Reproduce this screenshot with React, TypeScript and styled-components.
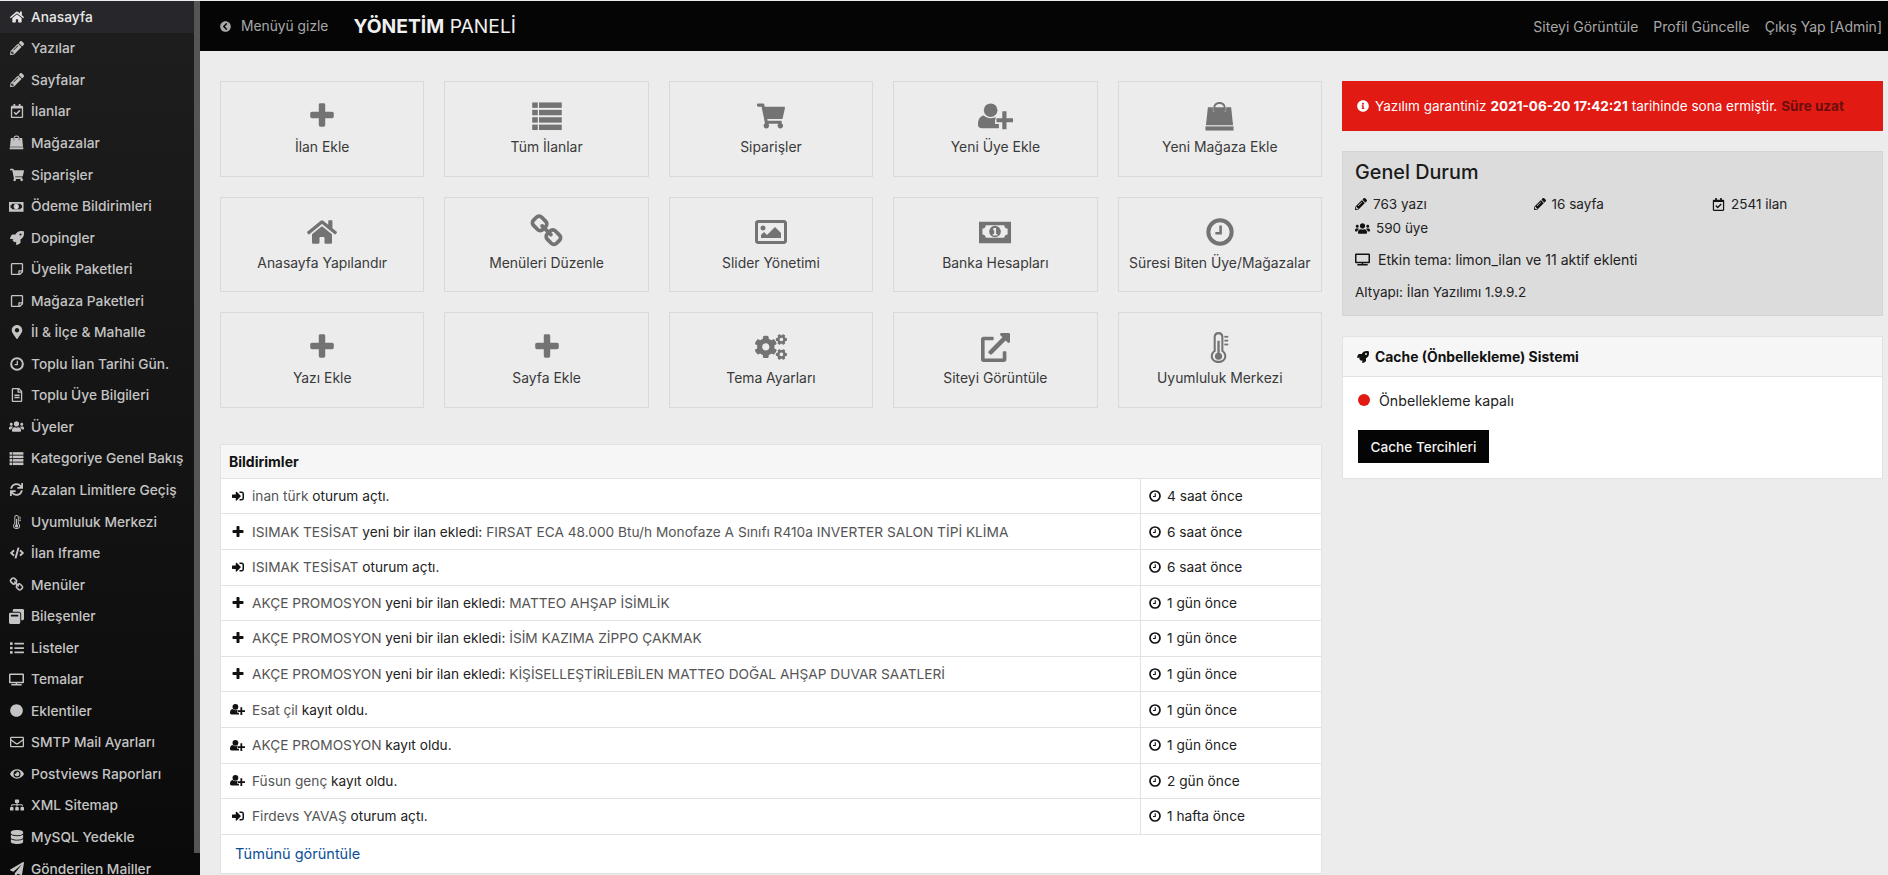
import React from "react";
import styled, { createGlobalStyle } from "styled-components";
import type { IconType } from "react-icons";
import {
  FaHome, FaPencilAlt, FaRegCalendarCheck, FaShoppingCart, FaRocket,
  FaRegStickyNote, FaMapMarkerAlt, FaRegFileAlt, FaUsers, FaSync, FaCode,
  FaWindowRestore, FaList, FaTv, FaCircle, FaRegEnvelope, FaEye, FaSitemap, FaDatabase,
  FaPaperPlane, FaSignInAlt, FaInfoCircle, FaChevronCircleLeft, FaRegImage,
  FaCogs, FaExternalLinkAlt,
} from "react-icons/fa";

const FONT = `Inter, "Noto Sans", "Liberation Sans", sans-serif`;

const Global = createGlobalStyle`
  html, body { margin: 0; padding: 0; height: 875px; overflow: hidden; background: #ececec; }
  body { font-family: ${FONT}; font-size: 13.7px; color: #222; }
  * { box-sizing: border-box; }
  a { text-decoration: none; color: inherit; }
`;

const Thermo: IconType = ({ size }: any) => (
  <svg viewBox="0 0 20 32" width={size} height={size} fill="currentColor">
    <path fillRule="evenodd" d="M9 0c-3 0-5 2-5 5v14c-2 1.500-3 3.500-3 6 0 4 3.500 7 8 7s8-3 8-7c0-2.500-1-4.500-3-6V5c0-3-2-5-5-5zm0 2.200c1.700 0 2.900 1.200 2.900 2.800v15.200c1.900 1 3 2.800 3 4.800 0 2.900-2.600 4.800-5.900 4.800S3.100 27.900 3.100 25c0-2 1.100-3.800 3-4.800V5c0-1.600 1.200-2.800 2.900-2.800z" />
    <circle cx="9" cy="25" r="3.700" />
    <rect x="7.800" y="9" width="2.400" height="14" />
    <rect x="15" y="4" width="4" height="1.800" />
    <rect x="15" y="8" width="4" height="1.800" />
    <rect x="15" y="12" width="4" height="1.800" />
  </svg>
);

const Plus: IconType = ({ size }: any) => (
  <svg viewBox="0 0 1792 1792" width={size} height={size} fill="currentColor">
    <path d="M1600 736v192q0 40-28 68t-68 28h-416v416q0 40-28 68t-68 28h-192q-40 0-68-28t-28-68v-416h-416q-40 0-68-28t-28-68v-192q0-40 28-68t68-28h416v-416q0-40 28-68t68-28h192q40 0 68 28t28 68v416h416q40 0 68 28t28 68z" />
  </svg>
);

const Chain: IconType = ({ size }: any) => (
  <svg viewBox="0 0 1792 1792" width={size} height={size} fill="currentColor">
    <path d="M1520 1216q0-40-28-68l-208-208q-28-28-68-28-42 0-72 32 3 3 19 18.500t21.500 21.500 15 19 13 25.500 3.500 27.500q0 40-28 68t-68 28q-15 0-27.500-3.500t-25.500-13-19-15-21.500-21.500-18.500-19q-33 31-33 73 0 40 28 68l206 207q27 27 68 27 40 0 68-26l147-146q28-28 28-67zm-703-705q0-40-28-68l-206-207q-28-28-68-28-39 0-68 27l-147 146q-28 28-28 67 0 40 28 68l208 208q27 27 68 27 42 0 72-31-3-3-19-18.500t-21.500-21.500-15-19-13-25.500-3.500-27.500q0-40 28-68t68-28q15 0 27.500 3.500t25.500 13 19 15 21.500 21.500 18.500 19q33-31 33-73zm895 705q0 120-85 203l-147 146q-83 83-203 83-121 0-204-85l-206-207q-83-83-83-203 0-123 88-209l-88-88q-86 88-208 88-120 0-204-84l-208-208q-84-84-84-204t85-203l147-146q83-83 203-83 121 0 204 85l206 207q83 83 83 203 0 123-88 209l88 88q86-88 208-88 120 0 204 84l208 208q84 84 84 204z" />
  </svg>
);

const Rows: IconType = ({ size }: any) => (
  <svg viewBox="0 0 26 24" width={size} height={size} fill="currentColor">
    {[1, 7, 13, 19].map((y) => (
      <React.Fragment key={y}>
        <rect x="1" y={y} width="4.500" height="4.400" />
        <rect x="6.500" y={y} width="18.500" height="4.400" />
      </React.Fragment>
    ))}
  </svg>
);

const Clock: IconType = ({ size }: any) => (
  <svg viewBox="0 0 24 24" width={size} height={size} fill="none" stroke="currentColor">
    <circle cx="12" cy="12" r="10" strokeWidth="3.400" />
    <path d="M12.500 6.500v6.500H8" strokeWidth="2.200" />
  </svg>
);

const Bag: IconType = ({ size }: any) => (
  <svg viewBox="0 0 32 32" width={size} height={size} fill="currentColor">
    <path d="M9.500 11V8C9.500 3.500 12 1 16 1s6.500 2.500 6.500 7v3h-1.800V8c0-3-1.800-5-4.700-5s-4.700 2-4.700 5v3z" />
    <path d="M4 6.500h5.200V11h2V6.500h9.600V11h2V6.500H28l2 18.500H2z" />
    <rect x="1.500" y="26.200" width="29" height="4.300" />
  </svg>
);

const Money: IconType = ({ size }: any) => (
  <svg viewBox="0 0 34 24" width={size} height={size} fill="currentColor">
    <path fillRule="evenodd" d="M0 2h33v22H0zM7 5.500C7 7.500 5.500 9 3.500 9v6c2 0 3.500 1.500 3.500 3.500h19c0-2 1.500-3.500 3.500-3.500V9C27.500 9 26 7.500 26 5.500z" />
    <circle cx="16.500" cy="12" r="6" />
    <path d="M15 8.500h2.600v6H19V16h-4.800v-1.500h1.400v-4l-1.200.500z" fill="#ececec" />
  </svg>
);

const UserAdd: IconType = ({ size }: any) => (
  <svg viewBox="0 0 36 28" width={size} height={size} fill="currentColor">
    <circle cx="13" cy="7.500" r="7" />
    <path d="M0 22.500C0 17 2 13.500 6 13c2 1.800 4.500 2.800 7 2.800S17.500 15 19.500 13.500l-1.500 1v2.800H18.500h-1v4.400h4V26H4c-2.500 0-4-1.400-4-3.500z" />
    <path d="M25 8.500h4.300v7.200H36V20h-6.700v7.200H25V20h-6v-4.300h6z" />
  </svg>
);

const Shell = styled.div`
  display: grid;
  grid-template-columns: 200px 1fr;
  height: 875px;
  padding-top: 1px;
  background: #ececec;
  overflow: hidden;
`;

const Sidebar = styled.nav`
  position: relative;
  height: 874px;
  overflow: hidden;
  background: linear-gradient(#1e1e1e, #0a0a0a);
`;

const ScrollThumb = styled.div`
  position: absolute;
  top: 0;
  right: 0;
  width: 6px;
  height: 852px;
  background: #555;
`;

const MenuItem = styled.a<{ $active?: boolean }>`
  display: flex;
  align-items: center;
  height: 31.55px;
  width: 194px;
  padding-left: 9px;
  background: ${(p) => (p.$active ? "#26262b" : "transparent")};
  color: ${(p) => (p.$active ? "#e6e6e6" : "#c4c4c4")};
  font-size: 13.750px;
  font-weight: 500;
  white-space: nowrap;
`;

const MenuIcon = styled.span`
  display: flex;
  justify-content: center;
  width: 15px;
  margin-right: 7px;
`;

const Main = styled.main`
  display: flex;
  flex-direction: column;
  min-width: 0;
`;

const TopBar = styled.header`
  display: flex;
  align-items: center;
  height: 50px;
  padding: 0 6px 0 20px;
  background: #050505;
`;

const HideMenu = styled.a`
  display: flex;
  align-items: center;
  gap: 10px;
  color: #a8a8a8;
  font-size: 13.800px;
`;

const Brand = styled.div`
  margin-left: 25px;
  color: #f0f0f0;
  font-size: 19.300px;
  b { font-weight: 700; }
`;

const TopLinks = styled.div`
  display: flex;
  gap: 15px;
  margin-left: auto;
  color: #a8a8a8;
  font-size: 14px;
`;

const Content = styled.div`
  display: grid;
  grid-template-columns: 1102px 541px;
  gap: 20px;
  padding: 30px 0 0 20px;
`;

const LeftCol = styled.div`
  display: flex;
  flex-direction: column;
  gap: 36px;
`;

const Tiles = styled.div`
  display: grid;
  grid-template-columns: repeat(5, 1fr);
  grid-auto-rows: 95.600px;
  gap: 20px;
`;

const Tile = styled.a`
  display: flex;
  flex-direction: column;
  align-items: center;
  border: 1.500px solid #d9d9d9;
  color: #3a3a3a;
  font-size: 13.900px;
  font-weight: 400;
  white-space: nowrap;
`;

const TileIcon = styled.span`
  display: flex;
  align-items: center;
  justify-content: center;
  height: 34px;
  margin-top: 17px;
  color: #737373;
`;

const TileLabel = styled.span`
  margin-top: 6px;
`;

const Panel = styled.section`
  background: #fff;
  border: 1px solid #e2e2e2;
`;

const PanelHead = styled.div<{ $h: number; $pad: number; $size: number }>`
  display: flex;
  align-items: center;
  gap: 6px;
  height: ${(p) => p.$h}px;
  padding: 0 ${(p) => p.$pad}px;
  background: #f6f6f6;
  border-bottom: 1px solid #e2e2e2;
  color: #111;
  font-size: ${(p) => p.$size}px;
  font-weight: 700;
`;

const NotifRow = styled.div`
  display: grid;
  grid-template-columns: 920px 1fr;
  height: 35.600px;
  border-bottom: 1px solid #e2e2e2;
`;

const NotifText = styled.div`
  display: flex;
  align-items: center;
  padding-left: 9px;
  border-right: 1px solid #e2e2e2;
  color: #222;
  white-space: nowrap;
  a { color: #555; }
`;

const NotifIcon = styled.span`
  display: flex;
  justify-content: center;
  width: 15px;
  margin-right: 7px;
  color: #111;
`;

const NotifTime = styled.div`
  display: flex;
  align-items: center;
  gap: 6px;
  padding-left: 8px;
  color: #222;
  white-space: nowrap;
  svg { color: #111; }
`;

const ViewAll = styled.a`
  display: flex;
  align-items: center;
  height: 38px;
  padding-left: 14px;
  color: #0b4f96;
  font-size: 14.500px;
`;

const RightCol = styled.aside`
  display: flex;
  flex-direction: column;
  gap: 20px;
`;

const Alert = styled.div`
  display: flex;
  align-items: center;
  gap: 6px;
  height: 50px;
  padding-left: 15px;
  background: #e21a14;
  color: #fff;
  font-size: 13.500px;
  white-space: nowrap;
  b { font-weight: 700; margin: 0 4px; }
  a { color: #6a0f0c; font-weight: 700; margin-left: 4px; }
`;

const Status = styled.section`
  height: 165px;
  padding: 8px 12px;
  background: #dcdcdc;
  border: 1px solid #d4d4d4;
  color: #222;
  font-size: 13.500px;
`;

const StatusTitle = styled.h2`
  margin: 0 0 8px;
  color: #1a1a1a;
  font-size: 19.800px;
  font-weight: 500;
  line-height: 24px;
`;

const StatGrid = styled.div`
  display: grid;
  grid-template-columns: repeat(3, 178.500px);
  grid-auto-rows: 24px;
`;

const Stat = styled.div`
  display: flex;
  align-items: center;
  gap: 6px;
  svg { color: #111; }
`;

const ThemeLine = styled.div`
  display: flex;
  align-items: center;
  gap: 8px;
  margin-top: 7px;
  height: 24px;
  font-size: 14.100px;
  svg { color: #111; }
`;

const BaseLine = styled.div`
  margin-top: 9px;
  line-height: 24px;
`;

const CacheBody = styled.div`
  padding: 12px 15px 15px;
`;

const CacheState = styled.div`
  display: flex;
  align-items: center;
  gap: 9px;
  height: 22px;
  color: #222;
  font-size: 14.200px;
`;

const Dot = styled.span`
  width: 12px;
  height: 12px;
  border-radius: 50%;
  background: #e21a14;
`;

const CacheButton = styled.button`
  display: block;
  width: 131px;
  height: 33px;
  margin-top: 19px;
  padding: 0;
  border: 0;
  background: #050505;
  color: #f2f2f2;
  font-family: ${FONT};
  font-size: 13.600px;
  font-weight: 500;
`;

const menu: [IconType, string, number][] = [
  [FaHome, "Anasayfa", 14], [FaPencilAlt, "Yazılar", 14], [FaPencilAlt, "Sayfalar", 14], [FaRegCalendarCheck, "İlanlar", 14],
  [Bag, "Mağazalar", 15], [FaShoppingCart, "Siparişler", 14], [Money, "Ödeme Bildirimleri", 15],
  [FaRocket, "Dopingler", 14], [FaRegStickyNote, "Üyelik Paketleri", 14], [FaRegStickyNote, "Mağaza Paketleri", 14],
  [FaMapMarkerAlt, "İl & İlçe & Mahalle", 14], [Clock, "Toplu İlan Tarihi Gün.", 14], [FaRegFileAlt, "Toplu Üye Bilgileri", 14],
  [FaUsers, "Üyeler", 15], [Rows, "Kategoriye Genel Bakış", 15], [FaSync, "Azalan Limitlere Geçiş", 13],
  [Thermo, "Uyumluluk Merkezi", 14], [FaCode, "İlan Iframe", 14], [Chain, "Menüler", 15], [FaWindowRestore, "Bileşenler", 15],
  [FaList, "Listeler", 14], [FaTv, "Temalar", 15], [FaCircle, "Eklentiler", 13], [FaRegEnvelope, "SMTP Mail Ayarları", 14],
  [FaEye, "Postviews Raporları", 14], [FaSitemap, "XML Sitemap", 14], [FaDatabase, "MySQL Yedekle", 14], [FaPaperPlane, "Gönderilen Mailler", 14],
];

const tiles: [IconType, string, number][] = [
  [Plus, "İlan Ekle", 30], [Rows, "Tüm İlanlar", 32], [FaShoppingCart, "Siparişler", 28], [UserAdd, "Yeni Üye Ekle", 35], [Bag, "Yeni Mağaza Ekle", 31],
  [FaHome, "Anasayfa Yapılandır", 30], [Chain, "Menüleri Düzenle", 35], [FaRegImage, "Slider Yönetimi", 32], [Money, "Banka Hesapları", 33], [Clock, "Süresi Biten Üye/Mağazalar", 28],
  [Plus, "Yazı Ekle", 30], [Plus, "Sayfa Ekle", 30], [FaCogs, "Tema Ayarları", 32], [FaExternalLinkAlt, "Siteyi Görüntüle", 29], [Thermo, "Uyumluluk Merkezi", 31],
];

const AK = "AKÇE PROMOSYON";
const NEW = " yeni bir ilan ekledi: ";
const notifs: [IconType, string, string, string, string, number][] = [
  [FaSignInAlt, "inan türk", " oturum açtı.", "", "4 saat önce", 12],
  [Plus, "ISIMAK TESİSAT", NEW, "FIRSAT ECA 48.000 Btu/h Monofaze A Sınıfı R410a INVERTER SALON TİPİ KLİMA", "6 saat önce", 14],
  [FaSignInAlt, "ISIMAK TESİSAT", " oturum açtı.", "", "6 saat önce", 12],
  [Plus, AK, NEW, "MATTEO AHŞAP İSİMLİK", "1 gün önce", 14],
  [Plus, AK, NEW, "İSİM KAZIMA ZİPPO ÇAKMAK", "1 gün önce", 14],
  [Plus, AK, NEW, "KİŞİSELLEŞTİRİLEBİLEN MATTEO DOĞAL AHŞAP DUVAR SAATLERİ", "1 gün önce", 14],
  [UserAdd, "Esat çil", " kayıt oldu.", "", "1 gün önce", 15],
  [UserAdd, AK, " kayıt oldu.", "", "1 gün önce", 15],
  [UserAdd, "Füsun genç", " kayıt oldu.", "", "2 gün önce", 15],
  [FaSignInAlt, "Firdevs YAVAŞ", " oturum açtı.", "", "1 hafta önce", 12],
];

export default function App() {
  return (
    <>
      <Global />
      <Shell>
        <Sidebar>
          {menu.map(([Icon, label, size], i) => (
            <MenuItem key={label} $active={i === 0}>
              <MenuIcon><Icon size={size} /></MenuIcon>
              {label}
            </MenuItem>
          ))}
          <ScrollThumb />
        </Sidebar>
        <Main>
          <TopBar>
            <HideMenu><FaChevronCircleLeft size={11} />Menüyü gizle</HideMenu>
            <Brand><b>YÖNETİM</b> PANELİ</Brand>
            <TopLinks>
              <a>Siteyi Görüntüle</a>
              <a>Profil Güncelle</a>
              <a>Çıkış Yap [Admin]</a>
            </TopLinks>
          </TopBar>
          <Content>
            <LeftCol>
              <Tiles>
                {tiles.map(([Icon, label, size], i) => (
                  <Tile key={i}>
                    <TileIcon><Icon size={size} /></TileIcon>
                    <TileLabel>{label}</TileLabel>
                  </Tile>
                ))}
              </Tiles>
              <Panel>
                <PanelHead $h={34} $pad={8} $size={14}>Bildirimler</PanelHead>
                {notifs.map(([Icon, who, verb, what, time, size], i) => (
                  <NotifRow key={i}>
                    <NotifText>
                      <NotifIcon><Icon size={size} /></NotifIcon>
                      <span><a>{who}</a>{verb}<a>{what}</a></span>
                    </NotifText>
                    <NotifTime><Clock size={12} />{time}</NotifTime>
                  </NotifRow>
                ))}
                <ViewAll>Tümünü görüntüle</ViewAll>
              </Panel>
            </LeftCol>
            <RightCol>
              <Alert>
                <FaInfoCircle size={12} />
                <span>Yazılım garantiniz<b>2021-06-20 17:42:21</b>tarihinde sona ermiştir.<a>Süre uzat</a></span>
              </Alert>
              <Status>
                <StatusTitle>Genel Durum</StatusTitle>
                <StatGrid>
                  <Stat><FaPencilAlt size={12} />763 yazı</Stat>
                  <Stat><FaPencilAlt size={12} />16 sayfa</Stat>
                  <Stat><FaRegCalendarCheck size={13} />2541 ilan</Stat>
                  <Stat><FaUsers size={15} />590 üye</Stat>
                </StatGrid>
                <ThemeLine><FaTv size={15} />Etkin tema: limon_ilan ve 11 aktif eklenti</ThemeLine>
                <BaseLine>Altyapı: İlan Yazılımı 1.9.9.2</BaseLine>
              </Status>
              <Panel>
                <PanelHead $h={40} $pad={14} $size={13.9}><FaRocket size={12} />Cache (Önbellekleme) Sistemi</PanelHead>
                <CacheBody>
                  <CacheState><Dot />Önbellekleme kapalı</CacheState>
                  <CacheButton>Cache Tercihleri</CacheButton>
                </CacheBody>
              </Panel>
            </RightCol>
          </Content>
        </Main>
      </Shell>
    </>
  );
}
